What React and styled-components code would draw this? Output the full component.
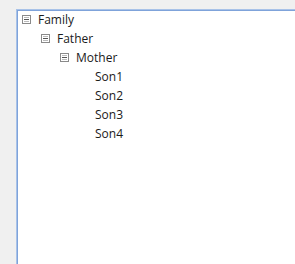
import React from "react";
import styled, { createGlobalStyle } from "styled-components";

const Global = createGlobalStyle`
  html, body { margin: 0; padding: 0; background: #f0f0f0; }
  body { width: 295px; height: 264px; overflow: hidden; font-family: "Segoe UI", "Open Sans", "Noto Sans", sans-serif; }
`;

const Page = styled.div`
  width: 295px;
  height: 264px;
  padding: 9px 0 0 16px;
  box-sizing: border-box;
  overflow: hidden;
`;

const Panel = styled.div`
  width: 300px;
  height: 280px;
  background: #fff;
  border-top: 1px solid #a8c2e8;
  border-left: 1px solid #a8c2e8;
  box-shadow: inset 1px 1px 0 #7fa3da;
  box-sizing: border-box;
  padding: 0px 0 0 5px;
`;

const Row = styled.div`
  display: flex;
  align-items: center;
  height: 19px;
  padding-left: ${(p) => p.$level * 19}px;
  font-size: 12px;
  color: #1a1a1a;
  white-space: nowrap;
`;

const Toggle = styled.span`
  width: 16px;
  flex: none;
  display: flex;
  align-items: center;
`;

const Label = styled.span`
  line-height: 19px;
  margin-top: 0px;
`;

const Minus = () => (
  <svg width="9" height="9" viewBox="0 0 9 9">
    <rect x="0.5" y="0.5" width="8" height="8" fill="#fff" stroke="#8a8a8a" />
    <line x1="2" y1="4.5" x2="7" y2="4.5" stroke="#555" />
    <line x1="2" y1="2.5" x2="7" y2="2.5" stroke="#bbb" />
    <line x1="2" y1="6.5" x2="7" y2="6.5" stroke="#bbb" />
  </svg>
);

const items = [
  { label: "Family", level: 0, expanded: true },
  { label: "Father", level: 1, expanded: true },
  { label: "Mother", level: 2, expanded: true },
  { label: "Son1", level: 3 },
  { label: "Son2", level: 3 },
  { label: "Son3", level: 3 },
  { label: "Son4", level: 3 },
];

export default function App() {
  return (
    <>
      <Global />
      <Page>
        <Panel>
          {items.map((it) => (
            <Row key={it.label} $level={it.level}>
              <Toggle>{it.expanded ? <Minus /> : null}</Toggle>
              <Label>{it.label}</Label>
            </Row>
          ))}
        </Panel>
      </Page>
    </>
  );
}
